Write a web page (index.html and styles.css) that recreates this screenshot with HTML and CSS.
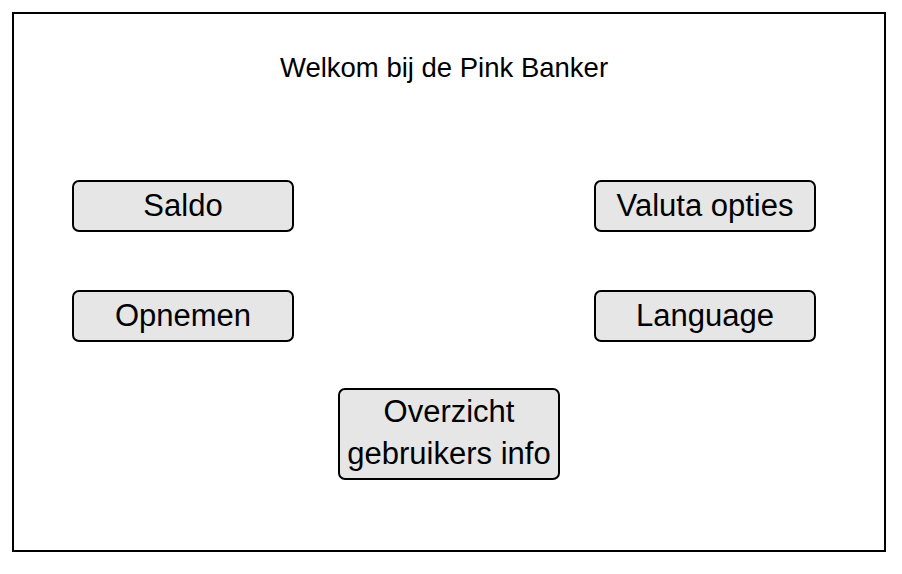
FILE: index.html
```html
<!DOCTYPE html>
<html lang="nl">
<head>
  <meta charset="UTF-8" />
  <meta name="viewport" content="width=device-width, initial-scale=1" />
  <title>Pink Banker</title>
  <link rel="stylesheet" href="styles.css">
</head>
<body>

  <div class="frame">
    <h1 class="title">Welkom bij de Pink Banker</h1>

    <div class="row row-top">
      <button class="btn">Saldo</button>
      <button class="btn">Valuta opties</button>
    </div>

    <div class="row row-mid">
      <button class="btn">Opnemen</button>
      <button class="btn">Language</button>
    </div>

    <div class="row row-bottom">
      <button class="btn btn-tall">Overzicht<br>gebruikers info</button>
    </div>
  </div>

</body>
</html>
```

FILE: styles.css
```css
body {
  margin: 0;
  padding: 12px;
  background-color: #fff;
  color: #000;
  font-family: "Liberation Sans", Arial, sans-serif;
}

.frame {
  box-sizing: border-box;
  width: 874px;
  height: 540px;
  border: 2px solid #000;
  display: flex;
  flex-direction: column;
  padding: 37.5px 68px 0 58px;
}

.title {
  margin: 0 0 96.5px;
  font-size: 27.5px;
  line-height: 32px;
  font-weight: 400;
  text-align: center;
}

.row {
  display: flex;
  justify-content: space-between;
}

.row-top {
  margin-bottom: 58px;
}

.row-mid {
  margin-bottom: 46px;
}

.row-bottom {
  justify-content: center;
  padding-left: 10px;
}

.btn {
  box-sizing: border-box;
  width: 222px;
  height: 52px;
  margin: 0;
  padding: 0;
  background-color: #e6e6e6;
  border: 2px solid #000;
  border-radius: 7px;
  color: #000;
  font-family: "Liberation Sans", Arial, sans-serif;
  font-size: 31px;
  line-height: 42px;
  display: flex;
  justify-content: center;
  align-items: center;
  text-align: center;
}

.btn-tall {
  height: 92px;
  padding-bottom: 2px;
}
```
